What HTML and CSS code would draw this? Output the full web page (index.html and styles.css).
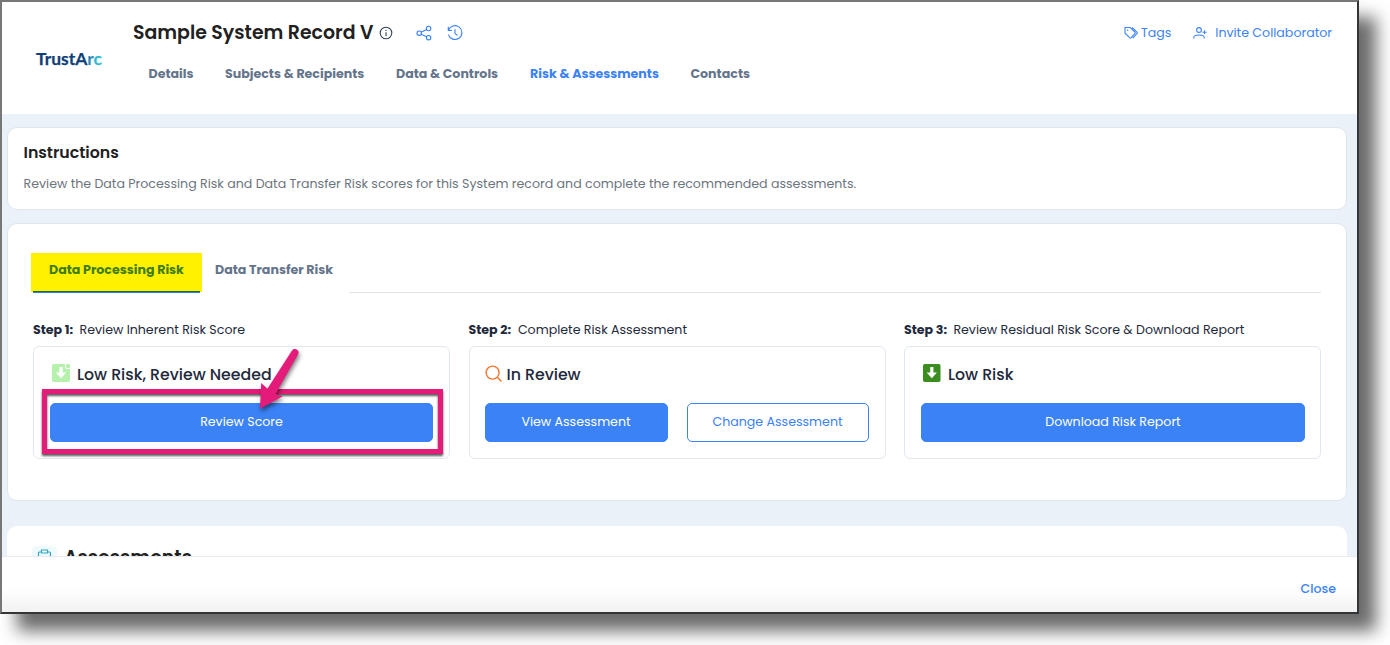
FILE: index.html
```html
<!DOCTYPE html>
<html lang="en">
<head>
<meta charset="utf-8">
<title>Sample System Record V</title>
<link rel="stylesheet" href="styles.css">
</head>
<body>
<div class="window">
  <header class="header">
    <svg class="logo" width="70" height="22" viewBox="0 0 70 22" role="img" aria-label="TrustArc">
      <text x="1" y="17.4" textLength="66" lengthAdjust="spacingAndGlyphs"><tspan class="logo-dark">TrustA</tspan><tspan class="logo-mid">r</tspan><tspan class="logo-light">c</tspan></text>
    </svg>
    <div class="header-main">
      <div class="title-row">
        <h1 class="title">Sample System Record V</h1>
        <svg class="icon info" width="14" height="14" viewBox="0 0 14 14"><circle cx="7" cy="7" r="5.8"/><path d="M7 6.3v3.9M7 3.8v1.2"/></svg>
        <svg class="icon share" width="16" height="16" viewBox="0 0 16 16"><circle cx="3.2" cy="8.2" r="2.2"/><circle cx="12.6" cy="3.5" r="2.2"/><circle cx="12.6" cy="12.7" r="2.2"/><path d="M5.2 7.2l5.4-2.7M5.2 9.2l5.4 2.6"/></svg>
        <svg class="icon history" width="16" height="16" viewBox="0 0 16 16"><path d="M1.3 1.8v3.7H5M1.5 5.3A6.9 6.9 0 1 1 1.4 9.6M8 4.3v4.3l2.5 1.6"/></svg>
      </div>
      <nav class="tabs">
        <a class="t-details">Details</a><a class="t-subjects">Subjects &amp; Recipients</a><a class="t-data">Data &amp; Controls</a><a class="t-risk active">Risk &amp; Assessments</a><a>Contacts</a>
      </nav>
    </div>
    <div class="actions">
      <a class="action tags"><svg class="icon" width="14" height="14" viewBox="0 0 14 14"><path d="M1 1.5h5.3l4.6 4.6a1 1 0 0 1 0 1.4L7.2 11.7a1.2 1.2 0 0 1-1.6 0L1 7.2zM8.2 1.5l4.700 4.700a1 1 0 0 1 0 1.400L8.700 12.200"/><circle class="dot" cx="3.700" cy="4.200" r=".7"/></svg><span>Tags</span></a>
      <a class="action invite"><svg class="icon" width="14" height="14" viewBox="0 0 14 14"><circle cx="6" cy="4" r="2.400"/><path d="M.8 12.500V11.500Q.8 9 6 9t5.200 2.500v1M9.500 6.200h4M11.500 4.300v3.800"/></svg><span>Invite Collaborator</span></a>
    </div>
  </header>

  <main class="content">
    <section class="card instructions">
      <h2>Instructions</h2>
      <p>Review the Data Processing Risk and Data Transfer Risk scores for this System record and complete the recommended assessments.</p>
    </section>

    <section class="card risk">
      <div class="risk-tabs">
        <div class="risk-tab selected"><span>Data Processing Risk</span></div>
        <div class="risk-tab other"><span>Data Transfer Risk</span></div>
        <div class="tab-line"></div>
      </div>
      <div class="steps">
        <div class="step">
          <div class="step-label"><b>Step 1:</b><span>Review Inherent Risk Score</span></div>
          <div class="step-card">
            <div class="status"><svg class="low" width="20" height="20" viewBox="0 0 20 20"><path fill="#b5f1ab" d="M3 1h12v4h4v12a2 2 0 0 1-2 2H3a2 2 0 0 1-2-2V3a2 2 0 0 1 2-2z"/><circle cx="17" cy="3" r="3.200" fill="#fff"/><circle cx="17" cy="3" r="2.200" fill="#b5f1ab"/><path fill="#fff" d="M8.300 4h3.400v5.500h3.500L10 15.200 4.800 9.500h3.500z"/></svg><span>Low Risk, Review Needed</span></div>
            <div class="buttons"><button class="btn primary">Review Score</button></div>
          </div>
        </div>
        <div class="step">
          <div class="step-label"><b>Step 2:</b><span>Complete Risk Assessment</span></div>
          <div class="step-card">
            <div class="status"><svg class="search" width="18" height="18" viewBox="0 0 18 18"><circle cx="7.600" cy="7.600" r="6.500"/><path d="M12.300 12.300l4.200 4.200"/></svg><span>In Review</span></div>
            <div class="buttons"><button class="btn primary wide">View Assessment</button><button class="btn outline">Change Assessment</button></div>
          </div>
        </div>
        <div class="step">
          <div class="step-label"><b>Step 3:</b><span>Review Residual Risk Score &amp; Download Report</span></div>
          <div class="step-card">
            <div class="status"><svg class="low" width="20" height="20" viewBox="0 0 20 20"><rect x="1" y="1" width="17.500" height="18" rx="1.800" fill="#3c8d20"/><path fill="#fff" d="M8.200 4h3.200v5.500h3.500L9.800 15.200 4.700 9.500h3.500z"/></svg><span>Low Risk</span></div>
            <div class="buttons"><button class="btn primary">Download Risk Report</button></div>
          </div>
        </div>
      </div>
    </section>

    <section class="card assessments">
      <span class="badge"><svg width="15" height="17" viewBox="0 0 15 17"><path d="M4.500 3H2.500a1 1 0 0 0-1 1v11.500h12V4a1 1 0 0 0-1-1h-2M4.500 1h6v3h-6z"/></svg></span>
      <h2>Assessments</h2>
    </section>
  </main>

  <footer class="footer"><a>Close</a></footer>
</div>

<div class="callout"></div>
<svg class="arrow" width="60" height="80" viewBox="250 340 60 80"><path d="M291.700 350.900a3.600 3.600 0 0 1 6.300 3.600L275.500 394l7.200 2.200L260 408.700 261.200 383l6.200 5.800z"/></svg>
</body>
</html>
```

FILE: styles.css
```css
* { box-sizing: border-box; }
body { margin: 0; height: 645px; overflow: hidden; background: #fff; font-family: Poppins, Inter, sans-serif; font-size: 12.6px; color: #1e293b; }
h1, h2, p { margin: 0; }

.window {
  width: 1359px; height: 614px; display: flex; flex-direction: column;
  border: 2px solid; border-color: #777 #333638 #333638 #777;
  box-shadow: 17px 17px 16px rgba(0, 0, 0, .58);
  background: #fff;
}

.icon { fill: none; stroke: #3b82f6; stroke-width: 1.1; flex: none; }
.icon .dot { fill: #3b82f6; stroke: none; }

/* Header */
.header { height: 112px; flex: none; display: flex; align-items: flex-start; }
.logo { margin: 46px 28px 0 33px; flex: none; overflow: visible; font: 700 17.5px Lato, sans-serif; }
.logo-dark { fill: #0f3f78; stroke: #0f3f78; stroke-width: .25px; }
.logo-mid { fill: #2588b5; }
.logo-light { fill: #35b9d3; stroke: #35b9d3; stroke-width: .25px; }
.header-main { flex: 1; padding-top: 18px; }
.title-row { display: flex; align-items: center; height: 26px; }
.title { width: 246px; font-size: 18.9px; font-weight: 600; line-height: 26px; color: #212121; white-space: nowrap; }
.info { stroke: #334155; }
.share { margin-left: 23px; }
.history { margin-left: 15px; }
.tabs { display: flex; margin: 18px 0 0 15.5px; line-height: 20px; font-weight: 700; color: #64748b; white-space: nowrap; }
.tabs .active { color: #3b82f6; }
.t-details { width: 76.5px; }
.t-subjects { width: 171px; }
.t-data { width: 134px; }
.t-risk { width: 160.5px; }
.actions { display: flex; padding: 20px 25px 0 0; gap: 22px; }
.action { display: flex; align-items: center; height: 21px; line-height: 21px; color: #3b82f6; }
.tags { gap: 3px; }
.invite { gap: 8px; }

/* Content */
.content { flex: 1; min-height: 0; overflow: hidden; background: #eaf1f9; padding: 13px 10px 0 5px; }
.card { background: #fff; border: 1px solid #dfe6ee; border-radius: 10px; }
.card h2 { color: #212121; font-weight: 600; }
.instructions { height: 83px; padding: 14px 15.5px; }
.instructions h2 { font-size: 15.75px; line-height: 22px; }
.instructions p { margin-top: 10px; line-height: 20px; color: #6c757d; white-space: nowrap; }

.risk { height: 278px; margin-top: 13px; padding: 29px 25px 0 23px; }
.risk-tabs { display: flex; height: 40px; font-weight: 700; }
.risk-tab { line-height: 33px; white-space: nowrap; }
.selected { width: 171px; height: 39px; background: #fff100; color: #3c7d0e; padding-left: 18px; }
.selected::after { content: ""; display: block; width: 167px; height: 2px; margin: 5px 0 0 -16px; background: linear-gradient(#226b42 50%, #2f78e8 50%); }
.other { padding-left: 13px; width: 147px; color: #64748b; }
.tab-line { flex: 1; border-bottom: 1px solid #dfe3ea; }

.steps { display: grid; grid-template-columns: repeat(3, 417px); justify-content: space-between; margin: 26px 0 0 2px; }
.step-label { display: flex; gap: 6px; line-height: 21px; height: 27px; white-space: nowrap; }
.step-label b { width: 40.5px; }
.step:nth-child(n+2) .step-label b { width: 43.4px; }
.step-card { height: 113px; border: 1px solid #e2e8f0; border-radius: 6px; padding: 16px 16px 0; }
.step:nth-child(2) .step-card { padding: 16px 16px 0 15px; }
.step:nth-child(3) .step-card { padding: 16px 15px 0 16px; }
.status { display: flex; align-items: center; height: 24px; font-size: 15.75px; font-weight: 500; line-height: 24px; }
.low { margin: -4px 6px 0 1px; }
.search { margin: -3px 4px 0 0; fill: none; stroke: #f1762f; stroke-width: 1.4; }
.buttons { display: flex; gap: 19px; margin-top: 16px; }
.btn { flex: 1 1 0; height: 39px; padding: 0 0 2px; border: 1px solid #3b82f6; border-radius: 5px; font: inherit; white-space: nowrap; }
.primary { background: #3b82f6; color: #fff; }
.wide { flex: 0 0 183px; }
.outline { background: #fff; color: #3b82f6; }

.assessments { display: flex; align-items: center; height: 64px; margin-top: 25px; padding-left: 24px; border-color: #fff; }
.badge { width: 25px; height: 25px; margin-right: 7px; border-radius: 5px; background: #effafd; display: flex; justify-content: center; padding-top: 3.5px; }
.badge svg { fill: none; stroke: #35a5bf; stroke-width: 1.2; }
.assessments h2 { font-size: 18.9px; line-height: 24px; }

/* Footer */
.footer { height: 56px; flex: none; border-top: 1px solid #e8eaed; padding: 21px 21px 0 0; text-align: right; line-height: 22px; font-weight: 500; color: #3b82f6; background: linear-gradient(#fff 55%, #f2f2f2); }

/* Annotation layer */
.callout { position: absolute; left: 42px; top: 389px; width: 401px; height: 65px; border: 5px solid #e41b78; filter: drop-shadow(0 2px 1px rgba(0, 0, 0, .65)); }
.arrow { position: absolute; left: 250px; top: 340px; fill: #e41b78; filter: drop-shadow(1px 3px 2px rgba(0, 0, 0, .5)); }
```
